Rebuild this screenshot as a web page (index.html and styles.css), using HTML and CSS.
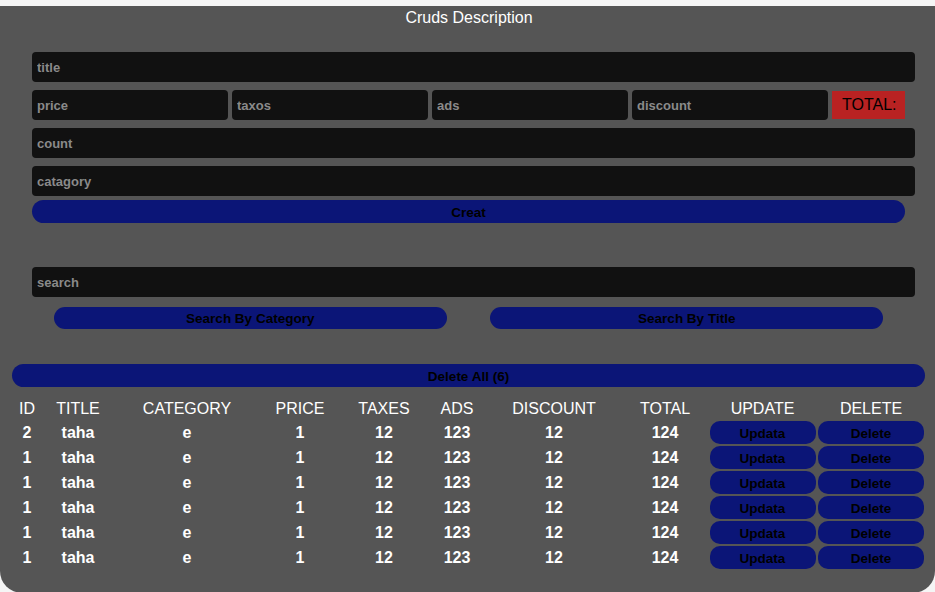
FILE: index.html
```html
<!DOCTYPE html>
<html>
<head>
<meta charset="utf-8">
<title>Cruds</title>
<link rel="stylesheet" href="styles.css">
</head>
<body>
<div class="crud">
  <h2 class="head">Cruds Description</h2>
  <div class="inputs">
    <input class="field" type="text" placeholder="title">
    <div class="price-row">
      <input class="field" type="text" placeholder="price">
      <input class="field" type="text" placeholder="taxos">
      <input class="field" type="text" placeholder="ads">
      <input class="field" type="text" placeholder="discount">
      <small class="total">TOTAL:</small>
    </div>
    <input class="field" type="text" placeholder="count">
    <input class="field" type="text" placeholder="catagory">
    <button class="btn create">Creat</button>
  </div>
  <div class="search">
    <input class="field" type="text" placeholder="search">
    <div class="search-btns">
      <button class="btn sbtn">Search By Category</button>
      <button class="btn sbtn">Search By Title</button>
    </div>
  </div>
  <div class="outputs">
    <button class="btn delall">Delete All (6)</button>
    <table class="tbl">
      <colgroup>
        <col class="c1"><col class="c2"><col class="c3"><col class="c4"><col class="c5">
        <col class="c6"><col class="c7"><col class="c8"><col class="c9"><col class="c10">
      </colgroup>
      <thead>
        <tr><th>ID</th><th>TITLE</th><th>CATEGORY</th><th>PRICE</th><th>TAXES</th><th>ADS</th><th>DISCOUNT</th><th>TOTAL</th><th>UPDATE</th><th>DELETE</th></tr>
      </thead>
      <tbody>
        <tr><td>2</td><td>taha</td><td>e</td><td>1</td><td>12</td><td>123</td><td>12</td><td>124</td><td><button class="btn rbtn">Updata</button></td><td><button class="btn rbtn">Delete</button></td></tr>
        <tr><td>1</td><td>taha</td><td>e</td><td>1</td><td>12</td><td>123</td><td>12</td><td>124</td><td><button class="btn rbtn">Updata</button></td><td><button class="btn rbtn">Delete</button></td></tr>
        <tr><td>1</td><td>taha</td><td>e</td><td>1</td><td>12</td><td>123</td><td>12</td><td>124</td><td><button class="btn rbtn">Updata</button></td><td><button class="btn rbtn">Delete</button></td></tr>
        <tr><td>1</td><td>taha</td><td>e</td><td>1</td><td>12</td><td>123</td><td>12</td><td>124</td><td><button class="btn rbtn">Updata</button></td><td><button class="btn rbtn">Delete</button></td></tr>
        <tr><td>1</td><td>taha</td><td>e</td><td>1</td><td>12</td><td>123</td><td>12</td><td>124</td><td><button class="btn rbtn">Updata</button></td><td><button class="btn rbtn">Delete</button></td></tr>
        <tr><td>1</td><td>taha</td><td>e</td><td>1</td><td>12</td><td>123</td><td>12</td><td>124</td><td><button class="btn rbtn">Updata</button></td><td><button class="btn rbtn">Delete</button></td></tr>
      </tbody>
    </table>
  </div>
</div>
</body>
</html>
```

FILE: styles.css
```css
* { box-sizing: border-box; }
html, body { margin: 0; padding: 0; }
body {
  background: #f5f5f5;
  padding-top: 6px;
  font-family: "Liberation Sans", Arial, sans-serif;
  color: #fff;
}
.crud {
  background: #555555;
  border-radius: 0 0 22px 22px;
  padding-bottom: 23px;
  overflow: hidden;
}
.head {
  margin: 0;
  font-size: 16px;
  font-weight: normal;
  line-height: 24px;
  text-align: center;
  color: #fff;
  padding-left: 3px;
}
.inputs, .search {
  padding: 0 30px 0 32px;
}
.inputs { padding-top: 22px; }
.field {
  display: block;
  width: calc(100% + 10px);
  height: 30px;
  margin: 0 0 8px 0;
  padding: 0 5px;
  border: none;
  outline: none;
  border-radius: 4px;
  background: #111111;
  color: #ccc;
  font-family: "Liberation Sans", Arial, sans-serif;
  font-weight: bold;
  font-size: 13px;
}
.field::placeholder { color: #8a8a8a; }
.price-row {
  display: grid;
  grid-template-columns: repeat(4, 196px) 73px;
  column-gap: 4px;
  align-items: center;
  margin-bottom: 8px;
}
.price-row .field { width: 196px; margin: 0; }
.total {
  height: 28px;
  background: #b92222;
  color: #000;
  font-size: 16px;
  line-height: 28px;
  padding-left: 10px;
}
.btn {
  display: block;
  border: none;
  background: #0b1577;
  color: #000;
  font-family: "Liberation Sans", Arial, sans-serif;
  font-weight: bold;
  font-size: 13.5px;
  padding: 1px 0 0 0;
  cursor: pointer;
}
.create {
  width: 100%;
  height: 23px;
  border-radius: 12px;
  margin-top: -4px;
}
.search { padding-top: 44px; }
.search .field { margin-bottom: 10px; }
.search-btns {
  display: grid;
  grid-template-columns: 1fr 1fr;
}
.sbtn {
  width: 90%;
  height: 22px;
  border-radius: 11px;
  justify-self: center;
}
.outputs {
  padding: 35px 10px 0 12px;
}
.delall {
  width: 100%;
  height: 23px;
  border-radius: 12px;
}
.tbl {
  width: 913px;
  margin-top: 9px;
  border-collapse: collapse;
  table-layout: fixed;
  text-align: center;
  font-size: 16px;
}
.c1 { width: 30px; }
.c2 { width: 72px; }
.c3 { width: 146px; }
.c4 { width: 80px; }
.c5 { width: 88px; }
.c6 { width: 58px; }
.c7 { width: 136px; }
.c8 { width: 86px; }
.c9 { width: 109px; }
.c10 { width: 108px; }
.tbl th {
  font-weight: normal;
  height: 24px;
  padding: 1px 0 0 0;
}
.tbl td {
  font-weight: bold;
  height: 25px;
  padding: 1px;
}
.rbtn {
  width: 106px;
  height: 23px;
  border-radius: 10px;
  margin: 0 auto;
}
```
